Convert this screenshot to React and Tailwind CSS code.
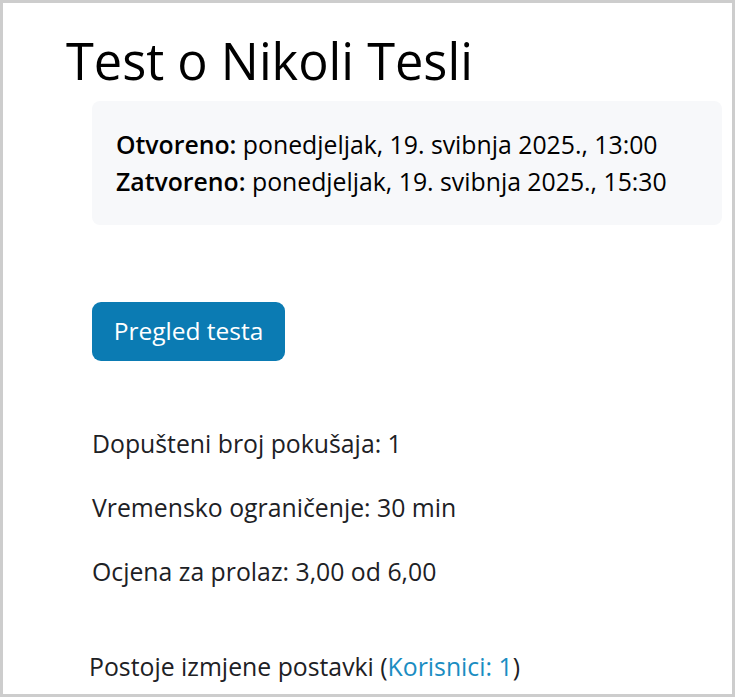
import React from "react";

const font = { fontFamily: '"Open Sans", "Noto Sans", sans-serif' };

export default function App() {
  return (
    <div className="w-[735px] h-[699px] bg-white" style={font}>
      <div className="w-[735px] h-[697px] border-[3px] border-[#cdcdcd] overflow-hidden text-[#1d2125]">
        <h1 className="ml-[63px] mt-[28px] text-[50.5px] leading-[60px] font-normal text-black">
          Test o Nikoli Tesli
        </h1>

        <div className="ml-[89px] mr-[10px] mt-[10px] h-[124px] rounded-lg bg-[#f7f8fa] pl-[24px] pt-[25px] text-[24.8px] leading-[37px] text-black">
          <div>
            <span className="font-semibold">Otvoreno:</span> ponedjeljak, 19. svibnja 2025., 13:00
          </div>
          <div>
            <span className="font-semibold">Zatvoreno:</span> ponedjeljak, 19. svibnja 2025., 15:30
          </div>
        </div>

        <div className="ml-[89px] mt-[77px]">
          <button className="h-[59px] w-[193px] rounded-[9px] bg-[#0b7bb3] text-[24.5px] text-white">
            Pregled testa
          </button>
        </div>

        <div className="ml-[89px] mt-[64px] text-[24.8px] leading-[37px] text-[#1d2125]">
          <p>Dopušteni broj pokušaja: 1</p>
          <p className="mt-[27px]">Vremensko ograničenje: 30 min</p>
          <p className="mt-[27px]">Ocjena za prolaz: 3,00 od 6,00</p>
        </div>

        <p className="ml-[86px] mt-[58px] text-[24.8px] leading-[37px] text-[#1d2125]">
          Postoje izmjene postavki (<a className="text-[#1a8dc2]">Korisnici: 1</a>)
        </p>
      </div>
    </div>
  );
}
